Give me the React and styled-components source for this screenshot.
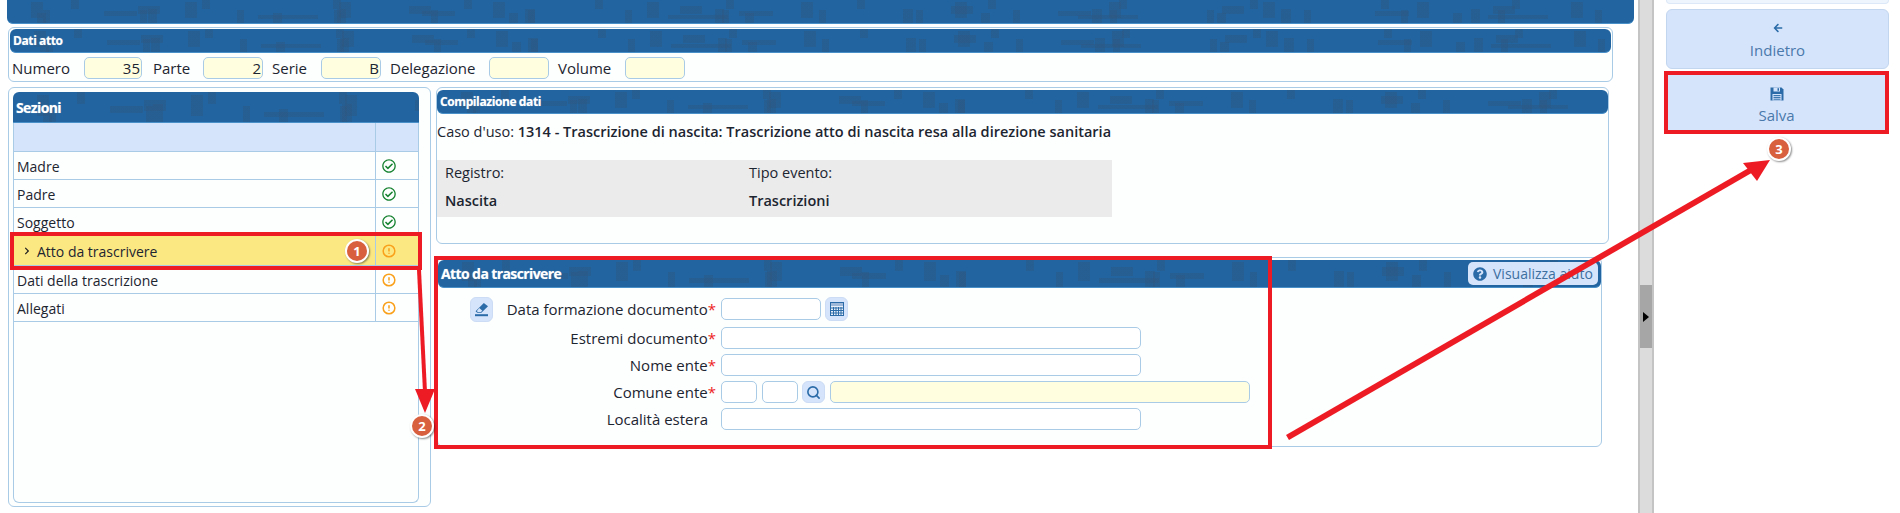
import styled, { createGlobalStyle, css } from 'styled-components';
import { FaRegCheckCircle, FaQuestionCircle, FaArrowLeft, FaChevronRight } from 'react-icons/fa';
import { FiAlertCircle, FiSearch } from 'react-icons/fi';

const GlobalStyle = createGlobalStyle`
  html, body {
    margin: 0;
    background: #fff;
  }
  * {
    box-sizing: border-box;
  }
  body {
    font-family: "Open Sans", "Liberation Sans", sans-serif;
    font-size: 15px;
    color: #1c2530;
  }
`;

const blotColor = 'rgba(48, 84, 122, 0.34)';
const blot = (w) => `linear-gradient(90deg, ${blotColor} 0 ${w}px, transparent ${w}px)`;

const blueBar = css`
  color: #fff;
  background-color: #21649f;
  background-image: ${blot(9)}, ${blot(34)}, ${blot(12)}, ${blot(60)}, ${blot(7)}, ${blot(22)}, ${blot(8)}, ${blot(10)};
  background-size: 236px 45%, 318px 22%, 154px 70%, 410px 18%, 97px 55%, 271px 35%, 131px 40%, 189px 60%;
  background-position: 30px 100%, 96px 60%, 178px 30%, 251px 80%, 327px 100%, 402px 40%, 64px 0, 140px 100%;
  background-repeat: repeat-x;
`;

const Page = styled.div`
  position: relative;
  display: flex;
  width: 1900px;
  height: 513px;
  overflow: hidden;
`;

const Main = styled.div`
  display: flex;
  flex-direction: column;
  width: 1627px;
  margin-left: 7px;
`;

const TopBar = styled.div`
  ${blueBar}
  flex: none;
  height: 24px;
  border-bottom: 1px solid #4a90c8;
  border-radius: 0 0 6px 6px;
`;

const Panel = styled.section`
  border: 1px solid #a9cbe6;
  border-radius: 6px;
  background: #fdfefe;
`;

const DatiPanel = styled(Panel)`
  flex: none;
  width: 1605px;
  height: 55px;
  margin: 3px 0 0 1px;
  padding: 1px;
`;

const TitleBar = styled.div`
  ${blueBar}
  display: flex;
  flex: none;
  align-items: center;
  justify-content: space-between;
  height: ${({ $h }) => $h || 24}px;
  padding: 0 3px;
  border-bottom: 1px solid #4a90c8;
  border-radius: 6px;
  font-size: ${({ $size }) => $size || 12}px;
  font-weight: 700;
  letter-spacing: ${({ $size }) => ($size ? -0.6 : -0.4)}px;
  text-shadow: 0 0 1px rgba(255, 255, 255, 0.5);
`;

const FieldsRow = styled.div`
  display: flex;
  align-items: center;
  height: 22px;
  margin-top: 4px;
  padding-left: 2px;
`;

const AttoLabel = styled.span`
  flex: none;
  width: ${({ $w }) => $w}px;
  padding-left: ${({ $pad }) => $pad || 0}px;
  white-space: nowrap;
`;

const Input = styled.div`
  flex: none;
  width: ${({ $w }) => $w}px;
  height: 22px;
  padding-right: 1px;
  border: 1px solid #a9cbe6;
  border-radius: 5px;
  background: ${({ $yellow }) => ($yellow ? '#ffffe0' : '#fff')};
  line-height: 21px;
  text-align: right;
`;

const ContentRow = styled.div`
  display: flex;
  gap: 5px;
  margin: 5px 0 0 1px;
`;

const SezioniOuter = styled(Panel)`
  display: flex;
  flex-direction: column;
  width: 423px;
  height: 420px;
  padding: 4px 11px 3px 4px;
`;

const SezioniInner = styled.div`
  flex: 1;
  border: 1px solid #a9cbe6;
  border-top: none;
  border-radius: 0 0 6px 6px;
`;

const SezioniTitle = styled(TitleBar)`
  border-radius: 6px 6px 0 0;
`;

const SectionRow = styled.div`
  position: relative;
  display: flex;
  height: ${({ $h }) => $h || 28}px;
  background: ${({ $bg }) => $bg || 'transparent'};
  border-bottom: 1px solid #a9cbe6;
  ${({ $active }) =>
    $active &&
    css`
      height: 30px;
      outline: 4px solid #ed1c24;
      z-index: 1;
    `}
`;

const SectionName = styled.div`
  display: flex;
  flex: 1;
  align-items: center;
  gap: 6px;
  padding: 1px 0 0 ${({ $active }) => ($active ? 9 : 3)}px;
  font-size: 14px;
`;

const SectionState = styled.div`
  display: flex;
  flex: none;
  align-items: center;
  width: 43px;
  padding: 1px 0 0 6px;
  border-left: 1px solid #a9cbe6;
  font-size: 14px;
  color: ${({ $ok }) => ($ok ? '#14822f' : '#f9a11b')};
`;

const RightColumn = styled.div`
  display: flex;
  flex-direction: column;
  width: 1173px;
`;

const CompilazionePanel = styled(Panel)`
  height: 157px;
  padding-top: 2px;
`;

const CasoUso = styled.div`
  height: 22px;
  margin-top: 7px;
  font-size: 14.5px;
  line-height: 22px;
  b {
    font-weight: 600;
  }
`;

const InfoGrid = styled.div`
  display: grid;
  grid-template-columns: 304px 1fr;
  grid-template-rows: 24px 33px;
  align-items: center;
  width: 675px;
  height: 57px;
  margin-top: 17px;
  padding-left: 8px;
  background: #ebebeb;
  font-size: 14.5px;
  b {
    font-weight: 600;
  }
`;

const AttoPanel = styled(Panel)`
  position: relative;
  width: 1165px;
  height: 190px;
  margin: 13px 0 0 1px;
  padding-top: 2px;
`;

const HelpButton = styled.div`
  display: flex;
  align-items: center;
  gap: 6px;
  width: 130px;
  height: 23px;
  padding-left: 5px;
  border-radius: 5px;
  background: #d6e4fb;
  color: #3d6f9f;
  font-size: 14px;
  font-weight: 400;
  letter-spacing: 0;
  text-shadow: none;
`;

const Form = styled.div`
  display: grid;
  grid-template-columns: 283px auto;
  row-gap: 5px;
  margin-top: 10px;
`;

const FormLabel = styled.div`
  display: flex;
  align-items: center;
  height: 22px;
  margin-bottom: ${({ $first }) => ($first ? 2 : 0)}px;
  padding-right: 5px;
  i {
    color: #ed1c24;
    font-style: normal;
  }
`;

const LabelText = styled.span`
  margin-left: auto;
  margin-right: ${({ $starless }) => ($starless ? 8 : 0)}px;
`;

const FormControls = styled.div`
  display: flex;
  align-items: center;
  gap: ${({ $gap }) => $gap || 4}px;
  height: 22px;
`;

const IconButton = styled.div`
  display: flex;
  flex: none;
  align-items: center;
  justify-content: center;
  width: 23px;
  height: ${({ $h }) => $h || 23}px;
  border: 1px solid #cbdcf4;
  border-radius: 6px;
  background: #d6e4fb;
  color: #2b6ca8;
`;

const EditButton = styled(IconButton)`
  height: 25px;
  margin-left: 32px;
`;

const SearchButton = styled(IconButton)`
  margin-left: -1px;
`;

const RedFrame = styled.div`
  position: absolute;
  top: -2px;
  left: -4px;
  width: 838px;
  height: 193px;
  border: 4px solid #ed1c24;
  pointer-events: none;
`;

const Splitter = styled.div`
  display: flex;
  flex: none;
  align-items: flex-start;
  justify-content: center;
  width: 16px;
  height: 100%;
  margin-left: 4px;
  padding-top: 285px;
  border-left: 2px solid #c4c4c4;
  border-right: 2px solid #c4c4c4;
  background: #dcdcdc;
`;

const SplitterHandle = styled.div`
  display: flex;
  align-items: center;
  justify-content: center;
  width: 12px;
  height: 63px;
  background: #a6a6a6;
  &::after {
    content: '';
    border-left: 6px solid #000;
    border-top: 5px solid transparent;
    border-bottom: 5px solid transparent;
  }
`;

const Sidebar = styled.aside`
  display: flex;
  flex-direction: column;
  gap: 3px;
  width: 223px;
  margin-left: 12px;
`;

const GhostButton = styled.div`
  height: 4px;
  margin-bottom: 2px;
  border: 1px solid #dce8f7;
  border-top: none;
  border-radius: 0 0 6px 6px;
  background: #eff5fd;
`;

const ActionButton = styled.div`
  display: flex;
  flex-direction: column;
  align-items: center;
  justify-content: center;
  gap: 7px;
  height: 60px;
  padding-top: 4px;
  border: 1px solid #c2d6ef;
  border-radius: 6px;
  background: #d6e4fb;
  color: #4a79ab;
  line-height: 20px;
  svg {
    color: #2b6ca8;
  }
  ${({ $marked }) =>
    $marked &&
    css`
      height: 55px;
      margin: 3px 4px 0 2px;
      padding-top: 6px;
      gap: 4px;
      border: none;
      border-radius: 0;
      outline: 4px solid #ed1c24;
    `}
`;

const Marker = styled.div`
  position: absolute;
  left: ${({ $x }) => $x - 12}px;
  top: ${({ $y }) => $y - 12}px;
  display: flex;
  align-items: center;
  justify-content: center;
  width: 24px;
  height: 24px;
  border: 2px solid #fff;
  border-radius: 50%;
  background: #d9603f;
  box-shadow: 1px 1px 2px rgba(0, 0, 0, 0.45);
  color: #fff;
  font-size: 13px;
  font-weight: 700;
  z-index: 3;
`;

const ArrowLayer = styled.svg`
  position: absolute;
  top: 0;
  left: 0;
  z-index: 2;
  pointer-events: none;
`;

function EraserIcon() {
  return (
    <svg width="15" height="15" viewBox="0 0 15 15" fill="#2b6ca8">
      <path d="M9.8 1 14 4.3 7.4 10.8H3.2L1.6 9.2Z" />
      <path d="M5.2 6.1 8.4 8.8 6.8 10H3.7L2.9 9.1Z" fill="#d6e4fb" />
      <rect x="1" y="12.2" width="13" height="2" />
    </svg>
  );
}

function CalendarIcon() {
  return (
    <svg width="14" height="14" viewBox="0 0 14 14">
      <rect x="0.5" y="0.5" width="13" height="13" fill="#eaf0fa" stroke="#2b6ca8" />
      <rect x="1" y="1" width="12" height="3" fill="#9db8d8" />
      <path d="M1 6h12M1 8.5h12M1 11h12M3.5 5v8M6 5v8M8.5 5v8M11 5v8" stroke="#2b6ca8" strokeWidth="1" />
    </svg>
  );
}

function FloppyIcon() {
  return (
    <svg width="14" height="14" viewBox="0 0 14 14" fill="currentColor">
      <path d="M0.5 0.5H11.5L13.5 2.5V13.5H0.5Z" />
      <rect x="3.5" y="0.5" width="6.5" height="4" fill="#d6e4fb" />
      <rect x="7.5" y="1.2" width="1.5" height="2.6" />
      <rect x="2.5" y="7" width="9" height="6.5" fill="#d6e4fb" />
      <path d="M3.5 8.6h7M3.5 10.4h7M3.5 12.2h7" stroke="currentColor" strokeWidth="1" />
    </svg>
  );
}

const sections = [
  { name: 'Madre', ok: true },
  { name: 'Padre', ok: true },
  { name: 'Soggetto', ok: true },
  { name: 'Atto da trascrivere', active: true },
  { name: 'Dati della trascrizione' },
  { name: 'Allegati' },
];

export default function App() {
  return (
    <Page>
      <GlobalStyle />
      <Main>
        <TopBar />
        <DatiPanel>
          <TitleBar>Dati atto</TitleBar>
          <FieldsRow>
            <AttoLabel $w={72}>Numero</AttoLabel>
            <Input $w={58} $yellow>35</Input>
            <AttoLabel $w={61} $pad={11}>Parte</AttoLabel>
            <Input $w={60} $yellow>2</Input>
            <AttoLabel $w={58} $pad={9}>Serie</AttoLabel>
            <Input $w={60} $yellow>B</Input>
            <AttoLabel $w={108} $pad={9}>Delegazione</AttoLabel>
            <Input $w={60} $yellow />
            <AttoLabel $w={76} $pad={9}>Volume</AttoLabel>
            <Input $w={60} $yellow />
          </FieldsRow>
        </DatiPanel>
        <ContentRow>
          <SezioniOuter>
            <SezioniTitle $h={31} $size={14}>Sezioni</SezioniTitle>
            <SezioniInner>
              <SectionRow $h={29} $bg="#d6e4fb">
                <SectionName />
                <SectionState />
              </SectionRow>
              {sections.map((s) => (
                <SectionRow key={s.name} $active={s.active} $bg={s.active ? '#fce883' : undefined}>
                  <SectionName $active={s.active}>
                    {s.active && <FaChevronRight size={8} color="#222" />}
                    {s.name}
                  </SectionName>
                  <SectionState $ok={s.ok}>
                    {s.ok ? <FaRegCheckCircle /> : <FiAlertCircle strokeWidth={2.6} />}
                  </SectionState>
                </SectionRow>
              ))}
            </SezioniInner>
          </SezioniOuter>
          <RightColumn>
            <CompilazionePanel>
              <TitleBar>Compilazione dati</TitleBar>
              <CasoUso>
                Caso d'uso: <b>1314 - Trascrizione di nascita: Trascrizione atto di nascita resa alla direzione sanitaria</b>
              </CasoUso>
              <InfoGrid>
                <span>Registro:</span>
                <span>Tipo evento:</span>
                <b>Nascita</b>
                <b>Trascrizioni</b>
              </InfoGrid>
            </CompilazionePanel>
            <AttoPanel>
              <TitleBar $h={28} $size={14}>
                Atto da trascrivere
                <HelpButton>
                  <FaQuestionCircle size={14} color="#2b6ca8" />
                  Visualizza aiuto
                </HelpButton>
              </TitleBar>
              <Form>
                <FormLabel $first>
                  <EditButton><EraserIcon /></EditButton>
                  <LabelText>Data formazione documento<i>*</i></LabelText>
                </FormLabel>
                <FormControls>
                  <Input $w={100} />
                  <IconButton $h={24}><CalendarIcon /></IconButton>
                </FormControls>
                <FormLabel><LabelText>Estremi documento<i>*</i></LabelText></FormLabel>
                <FormControls><Input $w={420} /></FormControls>
                <FormLabel><LabelText>Nome ente<i>*</i></LabelText></FormLabel>
                <FormControls><Input $w={420} /></FormControls>
                <FormLabel><LabelText>Comune ente<i>*</i></LabelText></FormLabel>
                <FormControls $gap={5}>
                  <Input $w={36} />
                  <Input $w={36} />
                  <SearchButton $h={22}><FiSearch size={15} strokeWidth={2.6} /></SearchButton>
                  <Input $w={420} $yellow />
                </FormControls>
                <FormLabel><LabelText $starless>Località estera</LabelText></FormLabel>
                <FormControls><Input $w={420} /></FormControls>
              </Form>
              <RedFrame />
            </AttoPanel>
          </RightColumn>
        </ContentRow>
      </Main>
      <Splitter>
        <SplitterHandle />
      </Splitter>
      <Sidebar>
        <GhostButton />
        <ActionButton>
          <FaArrowLeft size={10} />
          Indietro
        </ActionButton>
        <ActionButton $marked>
          <FloppyIcon />
          Salva
        </ActionButton>
      </Sidebar>

      <ArrowLayer width="1900" height="513">
        <g fill="#ed1c24" stroke="none">
          <polygon points="417,270 421,270 427,392 423,392" />
          <polygon points="415,389 435,389 425,413" />
          <polygon points="1286,435 1289,440 1755,171 1752,166" />
          <polygon points="1770,160 1743,163 1757,181" />
        </g>
      </ArrowLayer>
      <Marker $x={357} $y={251}>1</Marker>
      <Marker $x={422} $y={426}>2</Marker>
      <Marker $x={1779} $y={149}>3</Marker>
    </Page>
  );
}
